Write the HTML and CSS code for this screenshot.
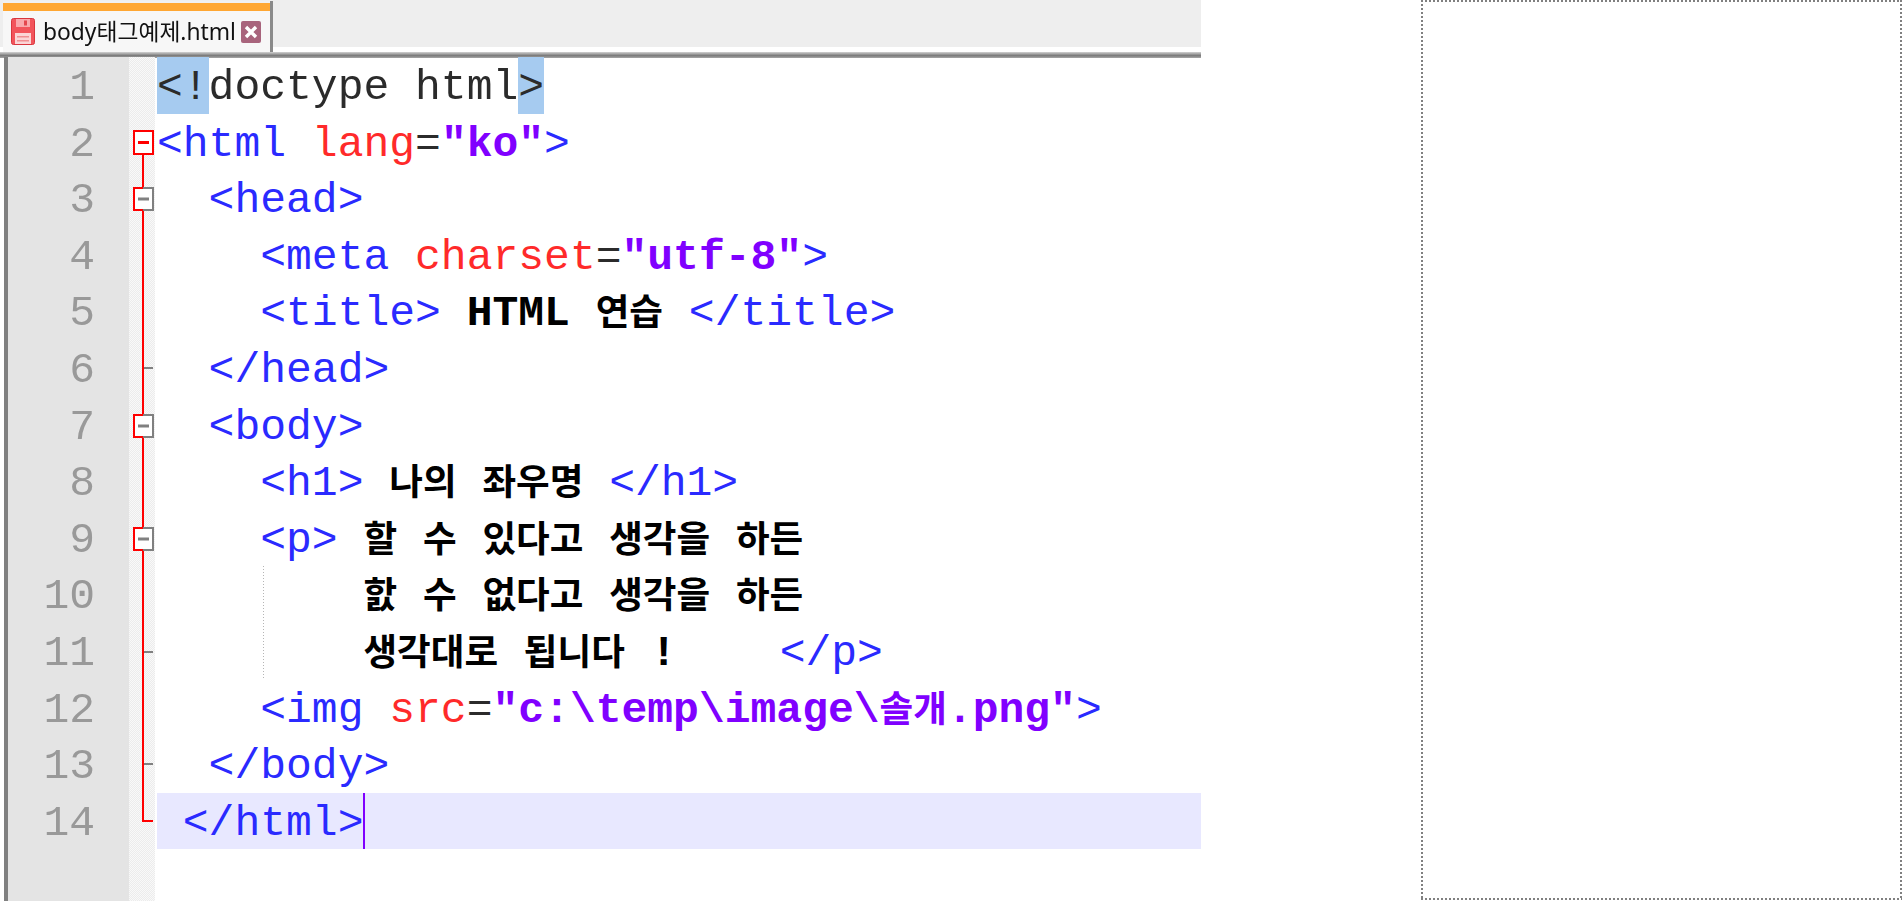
FILE: index.html
```html
<!DOCTYPE html>
<html lang="ko">
<head>
<meta charset="utf-8">
<title>body태그예제.html</title>
<link rel="stylesheet" href="styles.css">
</head>
<body>
<div class="page">
  <main class="editor">
    <div class="tabbar">
      <div class="tab">
        <svg class="disk" viewBox="0 0 24 27" width="24" height="27">
          <rect x="0.5" y="0.5" width="23" height="26" rx="2" fill="#f2545b" stroke="#d9363e"/>
          <rect x="5" y="1" width="14" height="8" fill="#f9a9ac"/>
          <rect x="13" y="2.5" width="3" height="5" fill="#e4474e"/>
          <rect x="4" y="15" width="16" height="11" fill="#fbd5d6"/>
          <rect x="6" y="18" width="12" height="1.5" fill="#f08f92"/>
          <rect x="6" y="22" width="12" height="1.5" fill="#f08f92"/>
        </svg>
        <span class="tabname">body태그예제.html</span>
        <svg class="close" viewBox="0 0 20 22" width="20" height="22">
          <rect x="0" y="0" width="20" height="22" rx="2" fill="#a8647c"/>
          <path d="M5 6 L15 16 M15 6 L5 16" stroke="#fff" stroke-width="3.4"/>
        </svg>
      </div>
    </div>
    <div class="rule"></div>
    <div class="panes">
      <div class="numbers">
        <div class="n">1</div><div class="n">2</div><div class="n">3</div><div class="n">4</div><div class="n">5</div><div class="n">6</div><div class="n">7</div><div class="n">8</div><div class="n">9</div><div class="n">10</div><div class="n">11</div><div class="n">12</div><div class="n">13</div><div class="n">14</div>
      </div>
      <div class="fold">
        <svg viewBox="0 0 26 800" width="26" height="800">
          <path d="M14 97V764H24" fill="none" stroke="#f00" stroke-width="2"/>
          <path d="M15 311H24M15 595H24M15 707H24" stroke="#808080" stroke-width="2"/>
          <rect x="5" y="74" width="19" height="23" fill="#fff" stroke="#f00" stroke-width="2"/>
          <path d="M9 85.5H20" stroke="#f00" stroke-width="3"/>
          <g fill="#fff" stroke="#808080" stroke-width="2">
            <rect x="5" y="131" width="19" height="22"/>
            <rect x="5" y="358" width="19" height="22"/>
            <rect x="5" y="471" width="19" height="22"/>
          </g>
          <path d="M9 142H20M9 369H20M9 482H20" stroke="#808080" stroke-width="3"/>
          <path d="M14 131H5V153H14M14 358H5V380H14M14 471H5V493H14" fill="none" stroke="#f00" stroke-width="2"/>
        </svg>
      </div>
      <div class="code">
        <div class="line"><span class="sel">&lt;!</span><span class="dt">doctype html</span><span class="sel">&gt;</span></div>
        <div class="line"><span class="t">&lt;html</span> <span class="a">lang</span><span class="e">=</span><span class="v">"ko"</span><span class="t">&gt;</span></div>
        <div class="line">  <span class="t">&lt;head&gt;</span></div>
        <div class="line">    <span class="t">&lt;meta</span> <span class="a">charset</span><span class="e">=</span><span class="v">"utf-8"</span><span class="t">&gt;</span></div>
        <div class="line">    <span class="t">&lt;title&gt;</span> <b class="x">HTML <span class="h">연습</span></b> <span class="t">&lt;/title&gt;</span></div>
        <div class="line">  <span class="t">&lt;/head&gt;</span></div>
        <div class="line">  <span class="t">&lt;body&gt;</span></div>
        <div class="line">    <span class="t">&lt;h1&gt;</span> <b class="x h">나의</b> <b class="x h">좌우명</b> <span class="t">&lt;/h1&gt;</span></div>
        <div class="line">    <span class="t">&lt;p&gt;</span> <b class="x h">할</b> <b class="x h">수</b> <b class="x h">있다고</b> <b class="x h">생각을</b> <b class="x h">하든</b></div>
        <div class="line guide">        <b class="x h">핤</b> <b class="x h">수</b> <b class="x h">없다고</b> <b class="x h">생각을</b> <b class="x h">하든</b></div>
        <div class="line guide">        <b class="x h">생각대로</b> <b class="x h">됩니다</b> <b class="x">!</b>    <span class="t">&lt;/p&gt;</span></div>
        <div class="line">    <span class="t">&lt;img</span> <span class="a">src</span><span class="e">=</span><span class="v">"c:\temp\image\<span class="h">솔개</span>.png"</span><span class="t">&gt;</span></div>
        <div class="line">  <span class="t">&lt;/body&gt;</span></div>
        <div class="line current"> <span class="t">&lt;/html&gt;</span><span class="caret"></span></div>
      </div>
    </div>
  </main>
  <aside class="frame"></aside>
</div>
</body>
</html>
```

FILE: styles.css
```css
* { box-sizing: border-box; }
html, body { margin: 0; height: 100%; background: #fff; overflow: hidden; }
.page { display: flex; height: 901px; }
.editor { width: 1201px; flex: none; display: flex; flex-direction: column; }
.tabbar { height: 52px; flex: none; padding: 1px 0 0; background: linear-gradient(#eee 0 47px, #fff 47px); }
.tab {
  width: 273px; height: 51px; margin: 0; padding: 10px 0 0 8px;
  display: flex; align-items: center;
  border-left: 3px solid transparent;
  border-right: 3px solid #8a8a8a;
  background: linear-gradient(#f0f0f0 0 2px, #ffa733 2px 10px, #f7f7f7 10px);
  background-clip: padding-box;
  filter: blur(.4px);
}
.disk { flex: none; }
.tabname { margin-left: 8px; width: 198px; font: 22.8px/30px "Noto Sans", "Noto Sans CJK KR", sans-serif; color: #111; white-space: nowrap; }
.close { flex: none; }
.rule { height: 6px; flex: none; background: linear-gradient(#d2d2d2, #7a7a7a 60%, #a8a8a8); }
.panes { flex: 1; display: flex; min-height: 0; padding-left: 4px; }
.numbers { width: 125px; flex: none; padding-right: 34px; background: #e4e4e4; border-left: 4px solid #808080; margin-top: -1px; }
.n, .line { height: 56.6px; line-height: 62px; font-family: "Liberation Mono", monospace; font-size: 43px; white-space: pre; }
.n { text-align: right; color: #999; filter: blur(.4px); }
.fold {
  width: 26px; margin-right: 2px; flex: none; margin-top: -1px;
  background: repeating-conic-gradient(#ececec 0 25%, #f9f9f9 0 50%) 0 0 / 2px 2px;
}
.fold svg { display: block; }
.code { flex: 1; min-width: 0; margin-top: -1px; }
.line { color: #2b2b2b; }
.sel { background: #a6cbf0; height: 56.6px; display: inline-block; vertical-align: top; }
.dt { color: #2b2b2b; filter: blur(.4px); }
.t { color: #2a2aff; }
.a { color: #ff2a2a; }
.e { color: #2b2b2b; }
.v { color: #8000ff; font-weight: 700; }
.x { color: #000; font-weight: 700; }
.h { font-family: "Noto Sans CJK KR", sans-serif; font-size: 36.6px; line-height: 0; }
.guide { background: linear-gradient(#b5b5b5 50%, transparent 50%) 106px 0 / 1px 3px repeat-y; }
.current { background-color: #e8e8ff; }
.caret { display: inline-block; width: 2px; height: 56.6px; background: #8000ff; vertical-align: top; }
.frame {
  width: 481px; height: 900px; margin-left: 220px; flex: none;
  background:
    repeating-linear-gradient(90deg, #808080 0 2px, transparent 2px 4px) 0 0 / 100% 2px no-repeat,
    repeating-linear-gradient(90deg, #808080 0 2px, transparent 2px 4px) 0 100% / 100% 2px no-repeat,
    repeating-linear-gradient(#808080 0 2px, transparent 2px 4px) 0 0 / 2px 100% no-repeat,
    repeating-linear-gradient(#808080 0 2px, transparent 2px 4px) 100% 0 / 2px 100% no-repeat;
}
```
